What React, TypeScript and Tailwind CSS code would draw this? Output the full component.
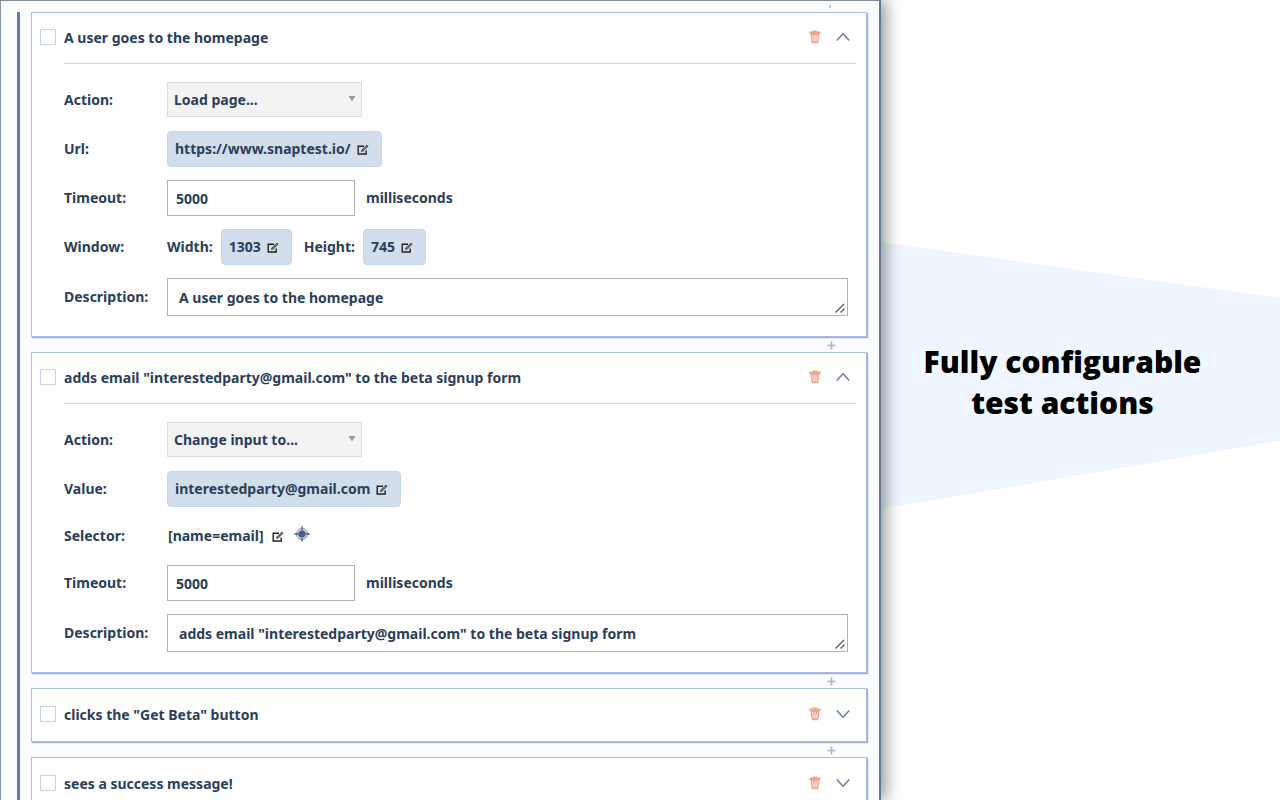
import { useState, type ReactNode } from 'react';

type Step = {
  id: string;
  title: string;
  open: boolean;
  body?: ReactNode;
};

function EditIcon() {
  return (
    <svg className="mt-0.5" width="12" height="12" viewBox="0 0 12 12" fill="none" stroke="#222" aria-hidden="true">
      <path d="M7 2.2H1.2v7.8h8V6.4" strokeWidth="1.4" />
      <path d="M4.4 7.6l.5-1.8L10 1l1.2 1.2-5 4.9z" strokeWidth=".6" fill="#777" />
    </svg>
  );
}

function TrashIcon() {
  return (
    <svg width="12" height="14" viewBox="0 0 12 14" aria-hidden="true">
      <path d="M3.8 1.4V.4h4.4v1H11.6v2.4H.4V1.4zM1.4 3.8h9.2L9.3 13.2H2.7z" fill="#eba795" />
      <path d="M3.6 5l.8 6.4M6 5v6.4M8.4 5l-.8 6.4" stroke="#fff" strokeWidth=".8" />
    </svg>
  );
}

function Chevron({ open }: { open: boolean }) {
  return (
    <svg width="14" height="10" viewBox="0 0 14 10" fill="none" stroke="#64789a" strokeWidth="1.4" aria-hidden="true">
      <path d={open ? 'M.8 8.5L7 1.8l6.2 6.7' : 'M.8 1.5L7 8.2l6.2-6.7'} />
    </svg>
  );
}

function TargetIcon() {
  return (
    <svg width="16" height="16" viewBox="0 0 16 16" fill="none" stroke="#4a617f" aria-hidden="true">
      <circle cx="8" cy="8" r="5.4" strokeWidth=".8" />
      <circle cx="8" cy="8" r="3.8" fill="#4a617f" stroke="none" />
      <path d="M8 .3v4M8 11.7v4M.3 8h4M11.7 8h4" strokeWidth="1.3" />
    </svg>
  );
}

function Row({ label, htmlFor, children }: { label: string; htmlFor?: string; children: ReactNode }) {
  return (
    <div className="flex items-center">
      <label htmlFor={htmlFor} className="w-[103px] shrink-0">
        {label}
      </label>
      {children}
    </div>
  );
}

function Chip({ id, children }: { id?: string; children: ReactNode }) {
  return (
    <button
      id={id}
      type="button"
      className="flex h-9 items-center gap-1.5 rounded-sm border border-[#c6d6ea] bg-[#d2deec] pl-[7px] pr-3"
    >
      {children}
      <EditIcon />
    </button>
  );
}

function ActionSelect({ id, value }: { id: string; value: string }) {
  return (
    <div className="relative h-9">
      <select
        id={id}
        defaultValue={value}
        className="h-[35px] w-[195px] appearance-none border border-[#dcdcdc] bg-[#f3f3f3] pl-1.5"
      >
        <option>{value}</option>
      </select>
      <svg className="absolute right-1.5 top-3.5" width="8" height="6" viewBox="0 0 8 6" aria-hidden="true">
        <path d="M.5 0h7L4 5.5z" fill="#9a9a9a" />
      </svg>
    </div>
  );
}

function Timeout({ id }: { id: string }) {
  return (
    <Row label="Timeout:" htmlFor={id}>
      <input id={id} type="text" defaultValue="5000" className="h-9 w-[188px] border border-[#b3b3b3] bg-white px-2" />
      <span className="ml-[11px]">milliseconds</span>
    </Row>
  );
}

function Description({ id, value }: { id: string; value: string }) {
  return (
    <Row label="Description:" htmlFor={id}>
      <div className="relative mr-2 flex-1">
        <textarea
          id={id}
          defaultValue={value}
          rows={1}
          className="block h-[38px] w-full resize-none overflow-hidden border border-[#b3b3b3] bg-white px-[11px] pt-[9px]"
        />
        <svg className="absolute bottom-0.5 right-0.5" width="12" height="12" viewBox="0 0 12 12" stroke="#555" strokeWidth="1.3" aria-hidden="true">
          <path d="M1.5 10.5L10 2M6.5 10.5l4-4" />
        </svg>
      </div>
    </Row>
  );
}

const steps: Step[] = [
  {
    id: 'home',
    title: 'A user goes to the homepage',
    open: true,
    body: (
      <>
        <Row label="Action:" htmlFor="home-action">
          <ActionSelect id="home-action" value="Load page..." />
        </Row>
        <Row label="Url:" htmlFor="home-url">
          <Chip id="home-url">https://www.snaptest.io/</Chip>
        </Row>
        <Timeout id="home-timeout" />
        <Row label="Window:" htmlFor="home-width">
          <span className="mr-2">Width:</span>
          <Chip id="home-width">1303</Chip>
          <label htmlFor="home-height" className="ml-3 mr-2">
            Height:
          </label>
          <Chip id="home-height">745</Chip>
        </Row>
        <Description id="home-description" value="A user goes to the homepage" />
      </>
    ),
  },
  {
    id: 'email',
    title: 'adds email "interestedparty@gmail.com" to the beta signup form',
    open: true,
    body: (
      <>
        <Row label="Action:" htmlFor="email-action">
          <ActionSelect id="email-action" value="Change input to..." />
        </Row>
        <Row label="Value:" htmlFor="email-value">
          <Chip id="email-value">interestedparty@gmail.com</Chip>
        </Row>
        <Row label="Selector:" htmlFor="email-selector">
          <button id="email-selector" type="button" className="flex h-8 items-center gap-2 pl-px">
            [name=email]
            <EditIcon />
          </button>
          <button type="button" aria-label="Pick element" className="mb-1 ml-2.5">
            <TargetIcon />
          </button>
        </Row>
        <Timeout id="email-timeout" />
        <Description
          id="email-description"
          value={'adds email "interestedparty@gmail.com" to the beta signup form'}
        />
      </>
    ),
  },
  { id: 'beta', title: 'clicks the "Get Beta" button', open: false },
  { id: 'success', title: 'sees a success message!', open: false },
];

function AddStep() {
  return (
    <div className="flex h-[15px] items-end justify-end pb-0.5 pr-[31px]">
      <button type="button" aria-label="Add step">
        <svg className="block" width="9" height="9" viewBox="0 0 9 9" stroke="#9db8dd" strokeWidth="1.6" aria-hidden="true">
          <path d="M4.5.5v8M.5 4.5h8" />
        </svg>
      </button>
    </div>
  );
}

function StepCard({ step }: { step: Step }) {
  const [open, setOpen] = useState(step.open);

  return (
    <section className="border border-[#adbfe6] bg-white pl-2 pr-2.5 shadow-[1px_1px_1px_#a3abc0]">
      <div className={open ? 'flex h-[50px] items-center' : 'flex h-[52px] items-center'}>
        <input
          id={step.id}
          type="checkbox"
          className="mb-[3px] size-4 shrink-0 appearance-none border border-[#c3d3e6] bg-white"
        />
        <label htmlFor={step.id} className="ml-2 flex-1">
          {step.title}
        </label>
        <button type="button" aria-label="Delete step" className="mb-[3px] mr-[15px]">
          <TrashIcon />
        </button>
        <button type="button" aria-label="Toggle step" className="mb-[3px] mr-1.5" onClick={() => setOpen(!open)}>
          <Chevron open={open} />
        </button>
      </div>
      {open && (
        <div className="ml-6 flex flex-col gap-[13px] border-t border-[#d6d6d6] pb-5 pt-[18px]">{step.body}</div>
      )}
    </section>
  );
}

function App() {
  return (
    <div className="flex h-screen overflow-hidden bg-white">
      <main className="z-10 flex flex-1 overflow-hidden border-l border-r-2 border-t border-l-[#8593a5] border-r-[#65788c] border-t-[#7d8b9c] bg-[#fbfcfe] pl-4 pr-3 font-['Noto_Sans',sans-serif] text-sm leading-5 font-bold text-[#2b3e5b] shadow-[4px_0_16px_rgba(0,0,0,0.45)]">
        <div className="mt-[11px] w-[3px] shrink-0 bg-[#607aa6]" />
        <div className="ml-[11px] flex-1">
          <div className="flex h-[11px] items-center justify-end pr-9">
            <span className="h-[3px] w-0.5 bg-[#b5cbe8]" />
          </div>
          {steps.map((step, i) => (
            <div key={step.id}>
              {i > 0 && <AddStep />}
              <StepCard step={step} />
            </div>
          ))}
        </div>
      </main>
      <aside className="relative flex w-[399px] shrink-0 items-center justify-center">
        <svg className="absolute inset-0 size-full" viewBox="0 0 399 800" preserveAspectRatio="none" aria-hidden="true">
          <path d="M0 242l399 56v143L0 509z" fill="#eff6ff" />
        </svg>
        <h1 className="relative mb-9 mr-9 text-center font-['Open_Sans',sans-serif] text-[30px] leading-[41px] font-extrabold text-black">
          Fully configurable
          <br />
          test actions
        </h1>
      </aside>
    </div>
  );
}

export default App;
